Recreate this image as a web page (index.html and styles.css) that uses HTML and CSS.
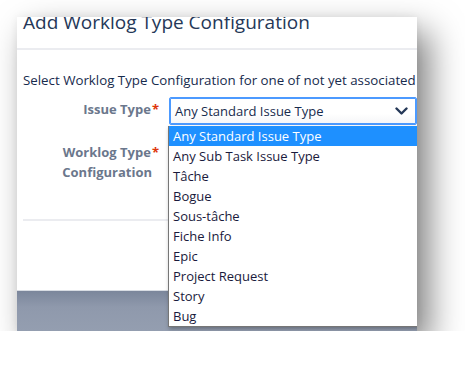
FILE: index.html
```html
<!DOCTYPE html>
<html lang="en">
<head>
    <meta charset="UTF-8">
    <meta name="viewport" content="width=device-width, initial-scale=1.0">
    <title>Add Worklog Type Configuration</title>
    <link rel="stylesheet" href="styles.css">
</head>
<body>
    <div class="shot">
        <div class="dialog">
            <div class="dialog-header">
                <h2>Add Worklog Type Configuration</h2>
            </div>
            <div class="dialog-body">
                <p class="intro">Select Worklog Type Configuration for one of not yet associated</p>
                <div class="field">
                    <label>Issue Type<span class="req">*</span></label>
                    <div class="select-wrap">
                        <div class="select">
                            <span>Any Standard Issue Type</span>
                            <svg width="13" height="9" viewBox="0 0 13 9"><path d="M1.5 1.5 L6.5 6.5 L11.5 1.5" fill="none" stroke="#253858" stroke-width="2.4" stroke-linecap="round" stroke-linejoin="round"/></svg>
                        </div>
                        <ul class="options">
                            <li class="selected">Any Standard Issue Type</li>
                            <li>Any Sub Task Issue Type</li>
                            <li>Tâche</li>
                            <li>Bogue</li>
                            <li>Sous-tâche</li>
                            <li>Fiche Info</li>
                            <li>Epic</li>
                            <li>Project Request</li>
                            <li>Story</li>
                            <li>Bug</li>
                        </ul>
                    </div>
                </div>
                <div class="field">
                    <label>Worklog Type<span class="req">*</span><br>Configuration</label>
                </div>
            </div>
            <div class="dialog-footer"></div>
        </div>
        <div class="backdrop"></div>
    </div>
</body>
</html>
```

FILE: styles.css
```css
body {
    margin: 0;
    padding: 0;
    background: #ffffff;
    font-family: "Open Sans", "Noto Sans", sans-serif;
}

.shot {
    margin: 17px 0 0 17px;
    width: 400px;
    height: 314px;
    overflow: hidden;
    background: #ffffff;
    box-shadow: 12px 15px 32px rgba(0, 0, 0, 0.5), 0 0 8px rgba(0, 0, 0, 0.06);
    display: flex;
    flex-direction: column;
}

.dialog {
    height: 274px;
    background: #ffffff;
}

.dialog-header {
    display: flow-root;
    height: 31px;
    border-bottom: 2px solid #ebecf0;
    padding: 0 6px;
}

.dialog-header h2 {
    margin: -8px 0 0 0;
    font-size: 19px;
    line-height: 26px;
    font-weight: 400;
    color: #253858;
    white-space: nowrap;
}

.dialog-body {
    padding: 20px 0 0 6px;
}

.intro {
    margin: 0 0 7px 0;
    font-size: 13.3px;
    line-height: 20px;
    color: #172b4d;
    white-space: nowrap;
}

.field {
    display: flex;
    margin-bottom: 15px;
}

.field label {
    width: 129px;
    flex: none;
    text-align: right;
    padding-top: 2px;
    font-size: 13px;
    line-height: 20px;
    font-weight: 700;
    color: #6b778c;
}

.req {
    color: #de350b;
    margin-right: -7px;
    padding-left: 1px;
}

.select-wrap {
    position: relative;
    margin-left: 17px;
    flex: 1;
}

.select {
    box-sizing: border-box;
    height: 28px;
    border: 1px solid #4c9aff;
    box-shadow: 0 0 0 1px #4c9aff inset;
    border-radius: 2px;
    background: linear-gradient(#ffffff 60%, #f4f5f7);
    display: flex;
    align-items: center;
    justify-content: space-between;
    padding: 0 8px 0 5px;
    font-size: 13px;
    line-height: 20px;
    color: #172b4d;
}

.options {
    position: absolute;
    top: 29px;
    left: -1px;
    right: -2px;
    margin: 0;
    padding: 0;
    list-style: none;
    background: #ffffff;
    border: 1px solid #767676;
    border-top: none;
    box-shadow: 1px 2px 4px rgba(0, 0, 0, 0.3);
    z-index: 2;
}

.options li {
    height: 20px;
    line-height: 20px;
    padding-left: 4px;
    font-size: 13px;
    color: #1a1a3c;
    white-space: nowrap;
}

.options li.selected {
    background: #1e90ff;
    color: #ffffff;
}

.dialog-footer {
    margin: 37px 0 0 6px;
    border-top: 2px solid #ebecf0;
}

.backdrop {
    height: 40px;
    border-top: 1px solid #d8dce3;
    background: linear-gradient(#7b869b, #8f99ac 40%, #949eb0);
}
```
